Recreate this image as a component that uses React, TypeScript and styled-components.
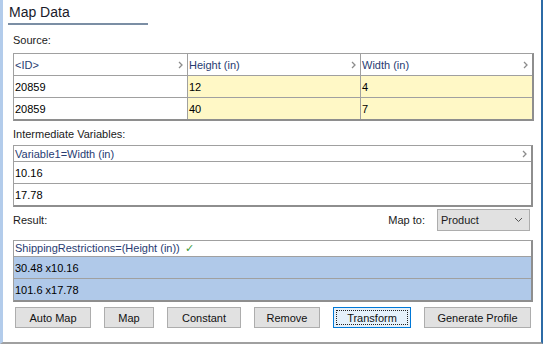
import styled, { createGlobalStyle } from 'styled-components'

const GlobalStyle = createGlobalStyle`
    body {
        margin: 0;
        background: #fff;
        font-family: 'Liberation Sans', Arial, sans-serif;
        font-size: 11px;
        color: #000;
    }
`

const sourceRows = [
    ['20859', '12', '4'],
    ['20859', '40', '7'],
]
const intermediateRows = ['10.16', '17.78']
const resultRows = ['30.48 x10.16', '101.6 x17.78']
const buttons: { label: string; width: number; focused?: boolean }[] = [
    { label: 'Auto Map', width: 76 },
    { label: 'Map', width: 50 },
    { label: 'Constant', width: 74 },
    { label: 'Remove', width: 66 },
    { label: 'Transform', width: 78, focused: true },
    { label: 'Generate Profile', width: 107 },
]

function Chevron() {
    return (
        <svg width='5' height='8' viewBox='0 0 5 8'>
            <path d='M1 1 L4 4 L1 7' fill='none' stroke='#8c8c8c' strokeWidth='1.3' />
        </svg>
    )
}

function App() {
    return (
        <Frame>
            <GlobalStyle />
            <Title>Map Data</Title>
            <Body>
                <Label>Source:</Label>
                <Table $width={521}>
                    <Row $cols='173px 173px 1fr' $height={21}>
                        <HeadCell>
                            <span>&lt;ID&gt;</span>
                            <Chevron />
                        </HeadCell>
                        <HeadCell>
                            <span>Height (in)</span>
                            <Chevron />
                        </HeadCell>
                        <HeadCell>
                            <span>Width (in)</span>
                            <Chevron />
                        </HeadCell>
                    </Row>
                    {sourceRows.map((r, i) => (
                        <Row key={i} $cols='173px 173px 1fr' $height={21}>
                            <Cell>{r[0]}</Cell>
                            <Cell $bg='#fff8c6'>{r[1]}</Cell>
                            <Cell $bg='#fff8c6'>{r[2]}</Cell>
                        </Row>
                    ))}
                </Table>

                <Label>Intermediate Variables:</Label>
                <Table $width={520}>
                    <Row $cols='1fr' $height={15}>
                        <HeadCell>
                            <span>Variable1=Width (in)</span>
                            <Chevron />
                        </HeadCell>
                    </Row>
                    {intermediateRows.map((v) => (
                        <Row key={v} $cols='1fr' $height={21}>
                            <Cell>{v}</Cell>
                        </Row>
                    ))}
                </Table>

                <ResultBar>
                    <span>Result:</span>
                    <MapTo>
                        <span>Map to:</span>
                        <Select>
                            <span>Product</span>
                            <svg width='9' height='6' viewBox='0 0 9 6'>
                                <path d='M1 1 L4.5 4.5 L8 1' fill='none' stroke='#555' strokeWidth='1' />
                            </svg>
                        </Select>
                    </MapTo>
                </ResultBar>
                <Table $width={520}>
                    <Row $cols='1fr' $height={15}>
                        <HeadCell>
                            <span>
                                ShippingRestrictions=(Height (in)) <Check>✓</Check>
                            </span>
                        </HeadCell>
                    </Row>
                    {resultRows.map((v) => (
                        <Row key={v} $cols='1fr' $height={21}>
                            <Cell $bg='#b0c9e9'>{v}</Cell>
                        </Row>
                    ))}
                </Table>

                <Buttons>
                    {buttons.map((b) => (
                        <Button key={b.label} $width={b.width} $focused={b.focused}>
                            {b.focused ? <Focus>{b.label}</Focus> : b.label}
                        </Button>
                    ))}
                </Buttons>
            </Body>
        </Frame>
    )
}

export default App

const Frame = styled.div`
    box-sizing: border-box;
    width: 543px;
    height: 344px;
    border-left: 3px solid #b3cceb;
    border-right: 2px solid #2c6ba6;
    border-bottom: 2px solid #a0a0a0;
    padding-left: 5px;
    display: flex;
    flex-direction: column;
`

const Title = styled.div`
    width: 140px;
    height: 25px;
    box-sizing: border-box;
    padding: 4px 0 0 1px;
    font-size: 14px;
    color: #1a1a2a;
    border-bottom: 2px solid #7b8ea4;
`

const Body = styled.div`
    padding-left: 5px;
    display: flex;
    flex-direction: column;
`

const Label = styled.div`
    height: 16px;
    line-height: 16px;
    margin-top: 7px;
    margin-bottom: 5px;
    color: #1a1a1a;
    &:nth-child(3) {
        margin-top: 5px;
        margin-bottom: 3px;
    }
`

const Table = styled.div<{ $width: number }>`
    width: ${(p) => p.$width}px;
    box-sizing: border-box;
    border: 1px solid #a0a0a0;
    border-right: 2px solid #8e8e8e;
    border-bottom: 2px solid #8e8e8e;
    background: #fff;
`

const Row = styled.div<{ $cols: string; $height: number }>`
    display: grid;
    grid-template-columns: ${(p) => p.$cols};
    height: ${(p) => p.$height}px;
    & + & {
        border-top: 1px solid #a0a0a0;
    }
`

const Cell = styled.div<{ $bg?: string }>`
    display: flex;
    align-items: center;
    padding-left: 1px;
    background: ${(p) => p.$bg ?? '#fff'};
    white-space: nowrap;
    & + & {
        border-left: 1px solid #a0a0a0;
    }
`

const HeadCell = styled(Cell)`
    justify-content: space-between;
    padding-right: 4px;
    color: #283c72;
`

const Check = styled.span`
    color: #3c9a3c;
    font-size: 11px;
    margin-left: 2px;
`

const ResultBar = styled.div`
    display: flex;
    align-items: center;
    justify-content: space-between;
    width: 517px;
    height: 22px;
    margin-top: 2px;
    margin-bottom: 9px;
    color: #1a1a1a;
`

const MapTo = styled.div`
    display: flex;
    align-items: center;
    gap: 12px;
`

const Select = styled.div`
    box-sizing: border-box;
    width: 93px;
    height: 22px;
    display: flex;
    align-items: center;
    justify-content: space-between;
    padding: 0 6px 0 3px;
    background: #e1e1e1;
    border: 1px solid #adadad;
    font-size: 11px;
`

const Buttons = styled.div`
    display: flex;
    gap: 13px;
    margin-top: 5px;
    padding-left: 2px;
`

const Button = styled.div<{ $width: number; $focused?: boolean }>`
    box-sizing: border-box;
    width: ${(p) => p.$width}px;
    height: 21px;
    display: flex;
    align-items: center;
    justify-content: center;
    background: ${(p) => (p.$focused ? '#e5f1fb' : '#e1e1e1')};
    border: 1px solid ${(p) => (p.$focused ? '#0078d7' : '#adadad')};
    padding: ${(p) => (p.$focused ? '2px' : '0')};
    font-size: 11px;
    color: #111;
`

const Focus = styled.div`
    flex: 1;
    align-self: stretch;
    display: flex;
    align-items: center;
    justify-content: center;
    border: 1px dotted #222;
`
